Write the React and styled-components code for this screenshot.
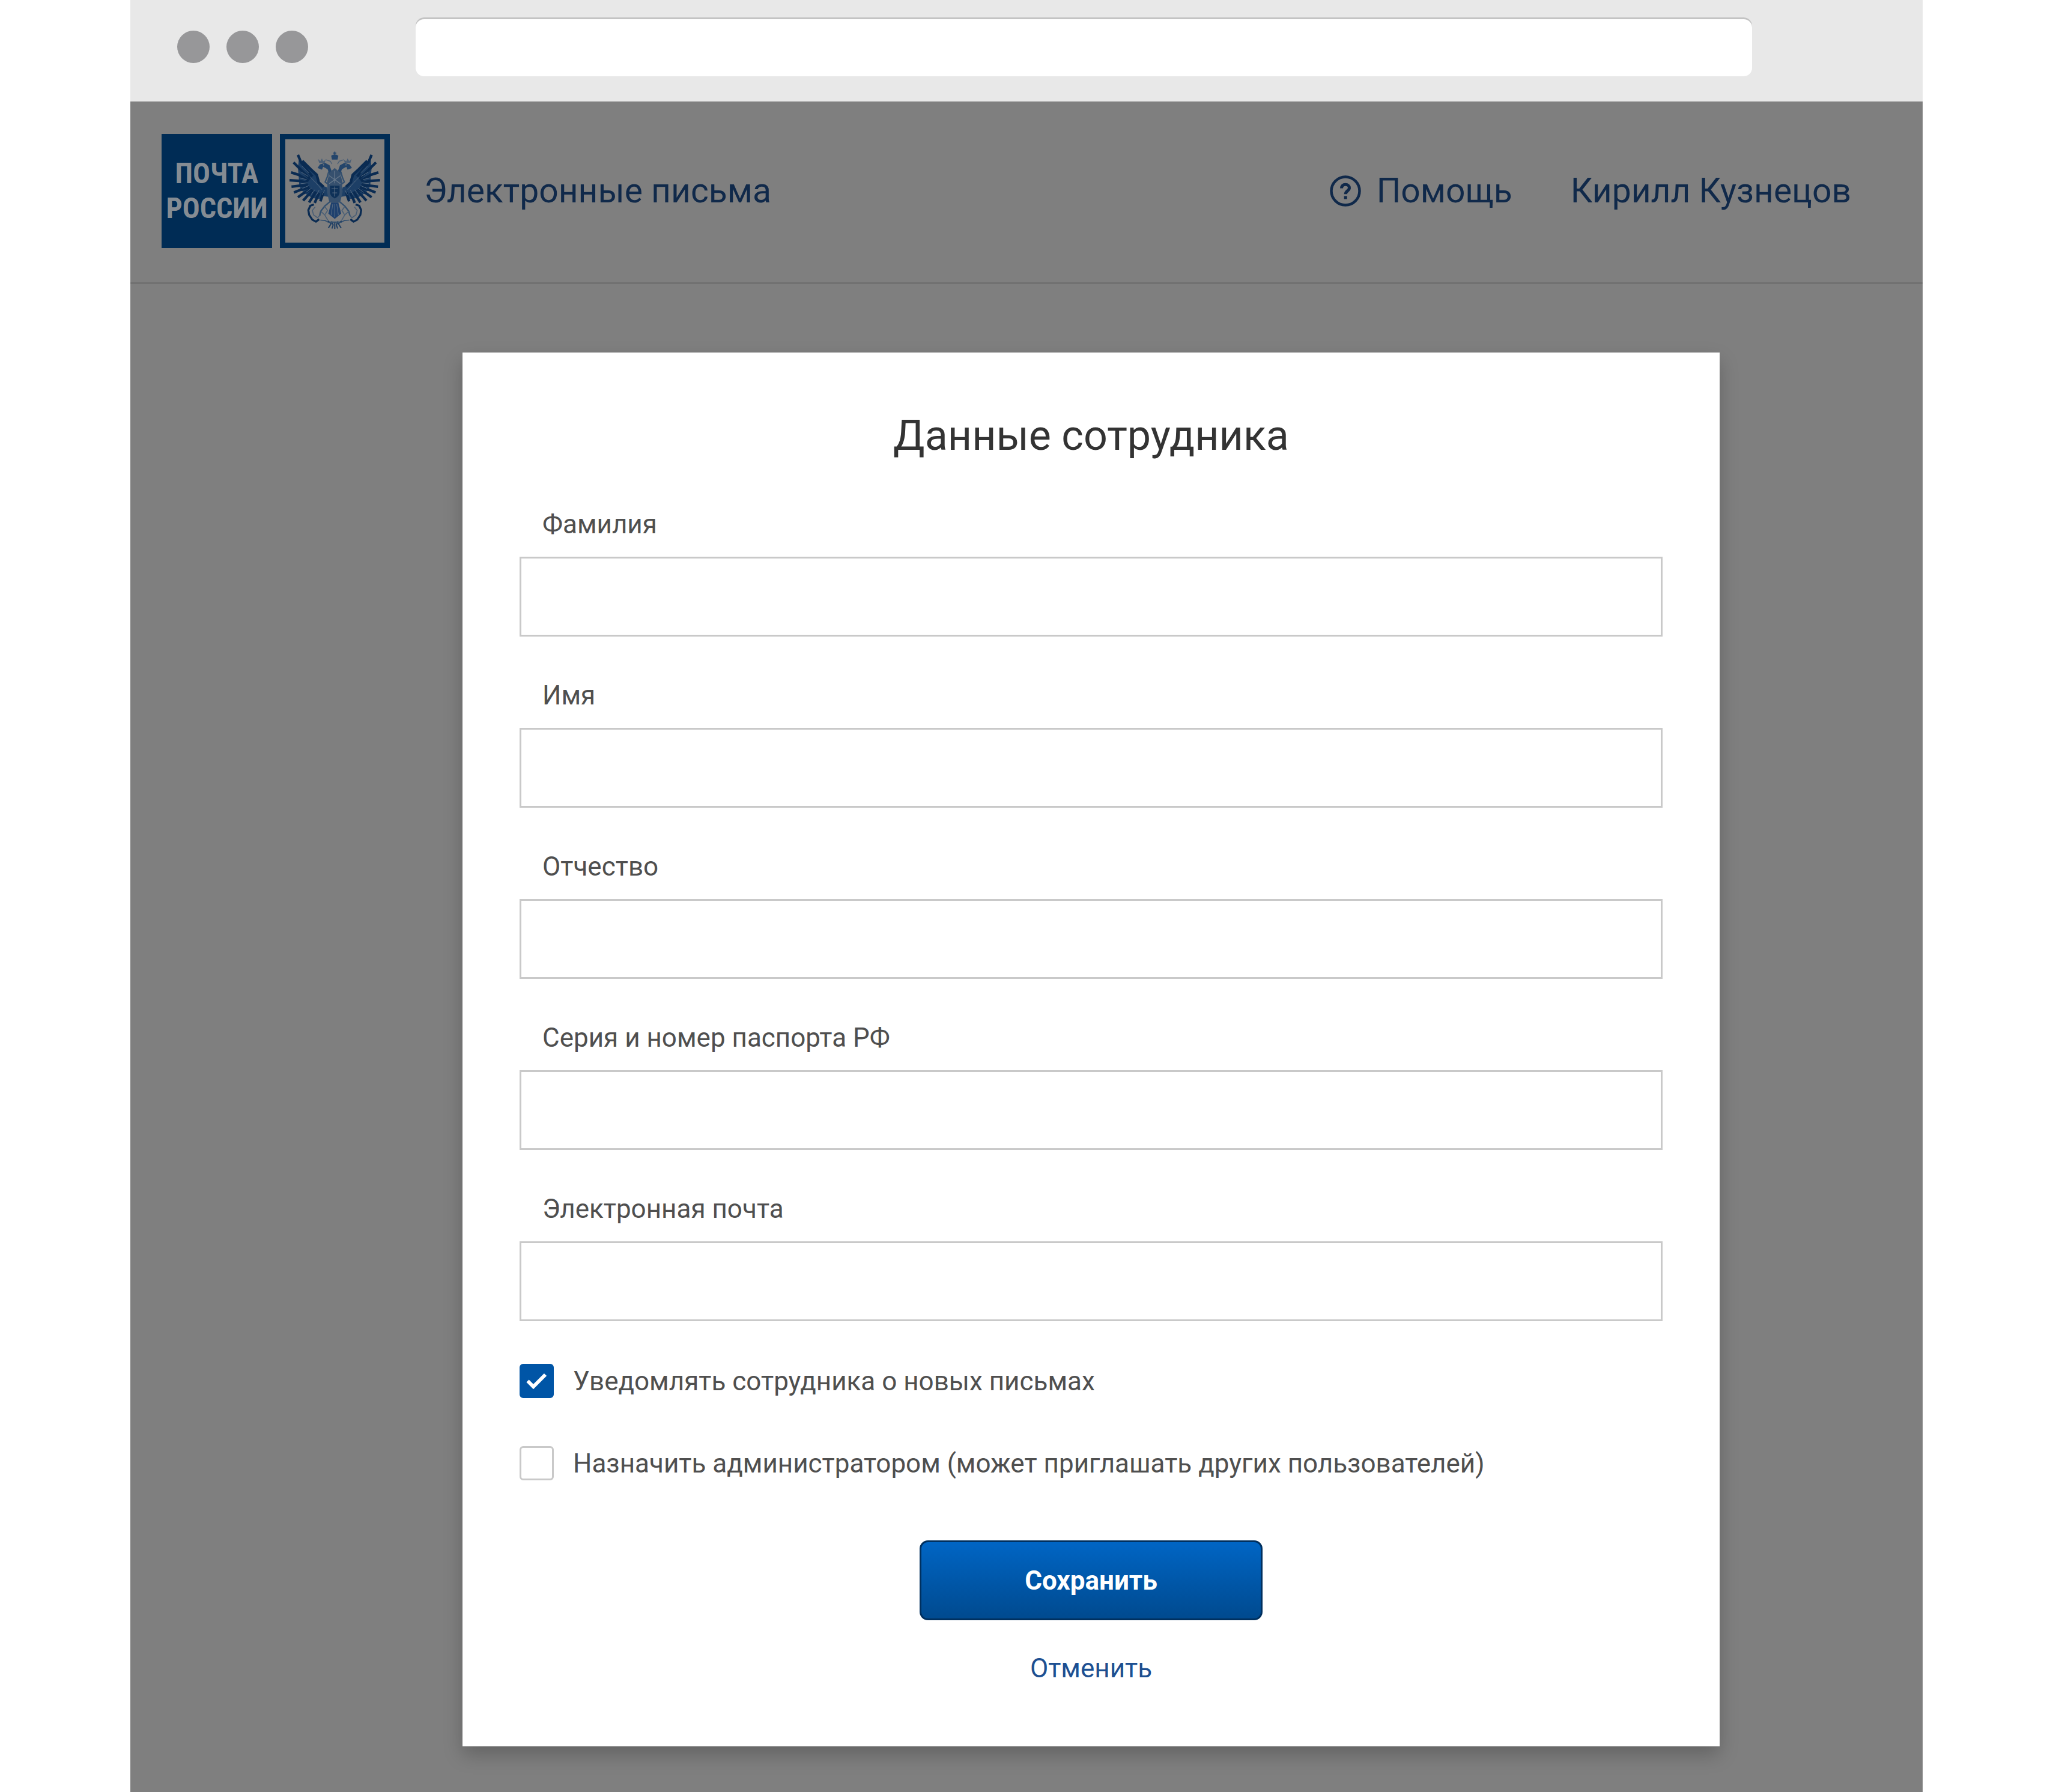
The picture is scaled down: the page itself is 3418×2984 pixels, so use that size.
import React, { useState } from 'react';
import styled, { createGlobalStyle } from 'styled-components';

const GlobalStyle = createGlobalStyle`
  * {
    box-sizing: border-box;
  }

  body {
    margin: 0;
    background: #fff;
    font-family: Roboto, sans-serif;
    color: #4f4f4f;
  }
`

const Frame = styled.div`
  display: flex;
  flex-direction: column;
  min-height: 100vh;
  margin: 0 217px;
  background: #7f7f7f;
`

const BrowserBar = styled.div`
  display: flex;
  gap: 179px;
  padding: 29px 284px 42px 78px;
  background: #e8e8e8;
`

const Dots = styled.div`
  display: flex;
  align-items: center;
  gap: 28px;
`

const Dot = styled.span`
  width: 54px;
  height: 54px;
  border-radius: 50%;
  background: #979799;
`

const AddressInput = styled.input`
  flex: 1;
  min-width: 0;
  height: 98px;
  padding: 0 24px;
  border: 0;
  border-radius: 14px;
  background: #fff;
  box-shadow: inset 0 3px 0 #c3c3c3;
  font: inherit;
  font-size: 44px;
`

const Header = styled.header`
  display: flex;
  align-items: center;
  padding: 54px 119px 57px 52px;
  border-bottom: 3px solid #717171;
`

const Logo = styled.a`
  display: flex;
  gap: 13px;
  margin-right: 57px;
  text-decoration: none;
`

const LogoName = styled.span`
  display: flex;
  flex-direction: column;
  align-items: center;
  justify-content: center;
  width: 184px;
  height: 190px;
  background: #002c55;
  color: #858c93;
  font-family: "Roboto Condensed", sans-serif;
  font-size: 48px;
  font-weight: 700;
  line-height: 58px;
`

const LogoEmblem = styled.span`
  width: 183px;
  height: 190px;
  border: 9px solid #002c55;

  svg {
    display: block;
    width: 100%;
    height: 100%;
  }
`

const HeaderLink = styled.a`
  display: flex;
  align-items: center;
  gap: 26px;
  color: #10294a;
  font-size: 57px;
  line-height: 68px;
  text-decoration: none;
`

const UserNav = styled.nav`
  display: flex;
  gap: 97px;
  margin-left: auto;
`

const Page = styled.main`
  flex: 1;
  padding: 114px 338px 75px 553px;
`

const Modal = styled.form`
  display: flex;
  flex-direction: column;
  padding: 96px 95px 104px;
  background: #fff;
  box-shadow: 0 14px 30px rgba(0, 0, 0, 0.22);
`

const Title = styled.h1`
  margin: 0 0 80px;
  color: #333;
  font-size: 70px;
  font-weight: 400;
  line-height: 84px;
  text-align: center;
`

const Fields = styled.div`
  display: flex;
  flex-direction: column;
  gap: 72px;
`

const Field = styled.div`
  display: flex;
  flex-direction: column;
  gap: 28px;
`

const Label = styled.label`
  padding-left: 38px;
  font-size: 44px;
  line-height: 52px;
`

const TextInput = styled.input`
  width: 100%;
  height: 133px;
  padding: 0 36px;
  border: 3px solid #c9c9c9;
  border-radius: 0;
  background: #fff;
  color: #333;
  font: inherit;
  font-size: 44px;
`

const Options = styled.div`
  display: flex;
  flex-direction: column;
  gap: 80px;
  margin: 71px 0 100px;
`

const Option = styled.label`
  display: flex;
  align-items: center;
  gap: 32px;
  height: 57px;
  font-size: 44px;
  line-height: 52px;
`

const CheckboxBox = styled.span`
  position: relative;
  width: 57px;
  height: 57px;

  svg {
    position: absolute;
    inset: 0;
    pointer-events: none;
  }
`

const CheckboxInput = styled.input`
  appearance: none;
  display: block;
  width: 57px;
  height: 57px;
  margin: 0;
  border: 3px solid #c9c9c9;
  border-radius: 6px;
  background: #fff;

  &:checked {
    border-color: #0055a6;
    background: #0055a6;
  }
`

const SaveButton = styled.button`
  align-self: center;
  width: 571px;
  height: 133px;
  border: 3px solid #00305f;
  border-radius: 14px;
  background: linear-gradient(#0065c4, #004a8f);
  color: #fff;
  font: inherit;
  font-size: 44px;
  font-weight: 700;
  cursor: pointer;
`

const CancelButton = styled.button`
  align-self: center;
  margin-top: 54px;
  padding: 0;
  border: 0;
  background: none;
  color: #1d4f91;
  font: inherit;
  font-size: 44px;
  line-height: 52px;
  cursor: pointer;
`

const HelpIcon = () => (
    <svg width="52" height="52" viewBox="0 0 52 52" fill="none" stroke="#10294a" aria-hidden="true">
        <circle cx="26" cy="26" r="23.5" strokeWidth="4.5"/>
        <path d="M19.5 21.5c0-4 2.8-6.300 6.500-6.300s6.500 2.300 6.500 5.800c0 4.600-6.300 5-6.300 10.200" strokeWidth="5"/>
        <path d="M26.200 34.500v5" strokeWidth="5"/>
    </svg>
)

const EagleHalf = () => (
    <>
        {/* wing */}
        <path
            d="M82 78 104 94 128 112 152 136 174 152 186 180 184 200 222 214 232 262 206 258 186 272 150 268 116 246 92 226 84 196 82 160 78 120Z"
            fill="#1d3f66" stroke="none"
        />
        <g stroke="#0a2b52" strokeWidth="13" strokeLinecap="butt">
            <path d="M78 52 94 90 150 160"/>
            <path d="M56 90 84 118 140 172"/>
            <path d="M44 140 82 152 132 182"/>
            <path d="M36 179 84 182 126 192"/>
            <path d="M46 211 88 206 130 204"/>
            <path d="M58 240 94 226 136 214"/>
            <path d="M78 264 106 244 146 222"/>
            <path d="M104 281 126 256 156 230"/>
            <path d="M134 290 150 264 168 236"/>
            <path d="M162 292 172 268 184 242"/>
            <path d="M190 284 198 262 204 240"/>
        </g>
        <path d="M100 82 142 124 172 152 182 190 206 212" stroke="#0a2b52" strokeWidth="13"/>
        <g stroke="#566b82" strokeWidth="3">
            <path d="M98 108 132 142"/>
            <path d="M94 138 130 160"/>
            <path d="M90 168 122 176"/>
            <path d="M92 196 126 192"/>
            <path d="M100 220 132 206"/>
            <path d="M118 240 146 218"/>
            <path d="M144 250 162 226"/>
            <path d="M170 254 184 228"/>
            <path d="M140 164 168 192 198 226"/>
            <path d="M198 252 212 228"/>
        </g>
        {/* head with its crown */}
        <path d="M178 72 184 92 212 92 216 78 204 84 198 70 190 84Z" fill="#4b5f76" stroke="none"/>
        <path d="M176 118 188 100 214 92 236 104 246 132 236 150 226 124 204 112 198 126Z" fill="#24456b" stroke="none"/>
        <circle cx="206" cy="102" r="3" fill="#7f7f7f" stroke="none"/>
        <path d="M216 76 240 84 248 98" stroke="#4b5f76" strokeWidth="4"/>
        {/* neck and flank */}
        <path d="M232 136 224 164 214 188 230 200 226 236 238 286" stroke="#33506f" strokeWidth="7"/>
        {/* leg and claw */}
        <path d="M238 286 212 308 192 334 186 358" stroke="#33506f" strokeWidth="7"/>
        <path d="M212 310 226 330 214 350M192 334 212 352 228 380" stroke="#4b5f76" strokeWidth="5"/>
        <path d="M190 378 214 380 232 390" stroke="#33506f" strokeWidth="5"/>
        {/* scepter and orb ribbons */}
        <path d="M158 300 140 306 130 328 134 352 150 376 168 386 184 374" stroke="#0a2b52" strokeWidth="10"/>
        <path d="M164 312 150 330 156 352 176 366 190 352" stroke="#4b5f76" strokeWidth="5"/>
        {/* tail tip */}
        <path d="M228 382 244 396 230 418M246 384 254 402 248 420" stroke="#1d3d62" strokeWidth="6"/>
    </>
)

const Eagle = () => (
    <svg viewBox="15 -24 495 513" fill="none" strokeLinejoin="round" aria-hidden="true">
        <EagleHalf/>
        <g transform="translate(524 0) scale(-1 1)">
            <EagleHalf/>
        </g>
        <path d="M262 36v16M254 43h16" stroke="#24456b" strokeWidth="5"/>
        <path d="M244 56q18-12 36 0l-4 20h-28Z" fill="#24456b"/>
        <path d="M236 140 262 118 288 140 300 186 296 238 286 290H238L228 238 224 186Z" fill="#36506e"/>
        <path d="M238 206h48v34q0 18-24 30-24-12-24-30Z" fill="#0f3158"/>
        <path d="M234 156 290 196M290 156 234 196M262 132v62" stroke="#66778a" strokeWidth="4"/>
        <path d="M246 222h32M262 210v50M250 242h24" stroke="#66778a" strokeWidth="3"/>
        <path d="M244 290H280L294 346 262 372 230 346Z" fill="#1f416e"/>
        <path d="M252 298 244 352M262 298v64M272 298 280 352" stroke="#586c82" strokeWidth="3"/>
        <path d="M234 388H290" stroke="#33506f" strokeWidth="6"/>
        <path d="M262 390v32" stroke="#1d3d62" strokeWidth="6"/>
    </svg>
)

const Checkbox = ({ label, checked, onChange }) => (
    <Option>
        <CheckboxBox>
            <CheckboxInput type="checkbox" checked={checked} onChange={e => onChange(e.target.checked)}/>
            {checked && (
                <svg width="57" height="57" viewBox="0 0 57 57" fill="none" aria-hidden="true">
                    <path d="M13.500 28.500 23 38 43 18" stroke="#fff" strokeWidth="6"/>
                </svg>
            )}
        </CheckboxBox>
        {label}
    </Option>
)

const fields = [
    { id: 'surname', label: 'Фамилия' },
    { id: 'name', label: 'Имя' },
    { id: 'patronymic', label: 'Отчество' },
    { id: 'passport', label: 'Серия и номер паспорта РФ' },
    { id: 'email', label: 'Электронная почта', type: 'email' },
]

const App = () => {
    const [notify, setNotify] = useState(true)
    const [admin, setAdmin] = useState(false)

    return (
        <Frame>
            <GlobalStyle/>
            <BrowserBar>
                <Dots>
                    <Dot/>
                    <Dot/>
                    <Dot/>
                </Dots>
                <AddressInput type="text" aria-label="Адрес"/>
            </BrowserBar>

            <Header>
                <Logo href="#">
                    <LogoName>
                        <span>ПОЧТА</span>
                        <span>РОССИИ</span>
                    </LogoName>
                    <LogoEmblem><Eagle/></LogoEmblem>
                </Logo>
                <HeaderLink href="#letters">Электронные письма</HeaderLink>
                <UserNav>
                    <HeaderLink href="#help"><HelpIcon/>Помощь</HeaderLink>
                    <HeaderLink href="#profile">Кирилл Кузнецов</HeaderLink>
                </UserNav>
            </Header>

            <Page>
                <Modal onSubmit={e => e.preventDefault()}>
                    <Title>Данные сотрудника</Title>
                    <Fields>
                        {fields.map(({ id, label, type = 'text' }) => (
                            <Field key={id}>
                                <Label htmlFor={id}>{label}</Label>
                                <TextInput id={id} name={id} type={type}/>
                            </Field>
                        ))}
                    </Fields>
                    <Options>
                        <Checkbox label="Уведомлять сотрудника о новых письмах" checked={notify} onChange={setNotify}/>
                        <Checkbox
                            label="Назначить администратором (может приглашать других пользователей)"
                            checked={admin}
                            onChange={setAdmin}
                        />
                    </Options>
                    <SaveButton type="submit">Сохранить</SaveButton>
                    <CancelButton type="button">Отменить</CancelButton>
                </Modal>
            </Page>
        </Frame>
    )
}

export default App;
